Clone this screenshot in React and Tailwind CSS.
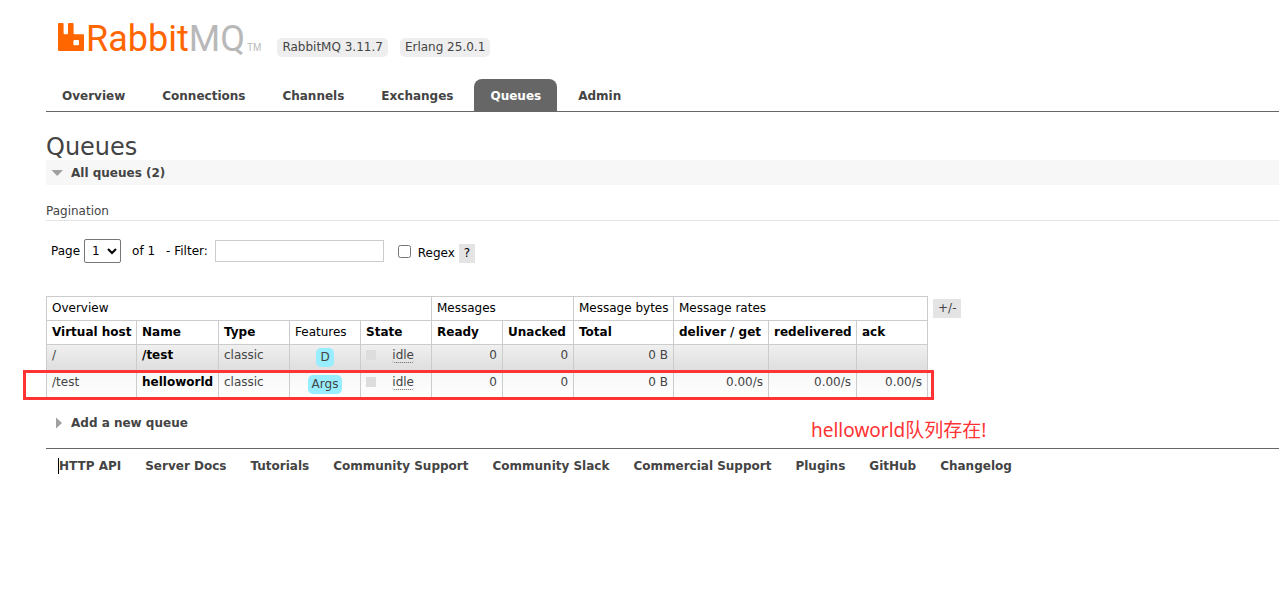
import { useState } from "react";

const tabs = ["Overview", "Connections", "Channels", "Exchanges", "Queues", "Admin"];

const footerLinks = [
  "HTTP API",
  "Server Docs",
  "Tutorials",
  "Community Support",
  "Community Slack",
  "Commercial Support",
  "Plugins",
  "GitHub",
  "Changelog",
];

const groups = [
  { label: "Overview", span: 5 },
  { label: "Messages", span: 2 },
  { label: "Message bytes", span: 1 },
  { label: "Message rates", span: 3 },
];

const columns = [
  { label: "Virtual host", width: "w-[90px]" },
  { label: "Name", width: "w-[82px]" },
  { label: "Type", width: "w-[71px]" },
  { label: "Features", width: "w-[71px]", plain: true },
  { label: "State", width: "w-[71px]" },
  { label: "Ready", width: "w-[71px]" },
  { label: "Unacked", width: "w-[71px]" },
  { label: "Total", width: "w-[100px]" },
  { label: "deliver / get", width: "w-[95px]" },
  { label: "redelivered", width: "w-[88px]" },
  { label: "ack", width: "w-[71px]" },
];

const queues = [
  {
    vhost: "/",
    name: "/test",
    type: "classic",
    feature: "D",
    state: "idle",
    numbers: ["0", "0", "0 B", "", "", ""],
  },
  {
    vhost: "/test",
    name: "helloworld",
    type: "classic",
    feature: "Args",
    state: "idle",
    numbers: ["0", "0", "0 B", "0.00/s", "0.00/s", "0.00/s"],
  },
];

const Logo = () => (
  <a href="#overview" className="flex items-start pl-3">
    <svg viewBox="0 0 26 28" className="mt-[5px] h-7 w-[26px]" aria-hidden="true">
      <path
        fill="#ff6600"
        fillRule="evenodd"
        d="M1 0H4.6Q5.6 0 5.6 1V10.2Q5.6 11.2 6.6 11.2H9Q10 11.2 10 10.2V1Q10 0 11 0H14.6Q15.6 0 15.6 1V10.2Q15.6 11.2 16.6 11.2H25Q26 11.2 26 12.2V27Q26 28 25 28H1Q0 28 0 27V1Q0 0 1 0ZM16.4 17Q15.4 17 15.4 18V21.2Q15.4 22.2 16.4 22.2H20Q21 22.2 21 21.2V18Q21 17 20 17Z"
      />
    </svg>
    <span className="ml-[2px] font-[Roboto,sans-serif] text-[36px] leading-[42px] font-normal text-[#ff6600]">
      Rabbit<span className="text-[#b8b8b8]">MQ</span>
    </span>
    <span className="ml-[2px] pt-6 font-['Liberation_Sans',sans-serif] text-[10px] leading-3 text-[#b8b8b8]">
      TM
    </span>
  </a>
);

const Tag = ({ children }) => (
  <span className="rounded-[5px] bg-[#eeeeee] px-[5px] leading-[19px]">{children}</span>
);

const SectionTitle = ({ open, onClick, children }) => (
  <h2 className={open ? "bg-[#f7f7f7]" : ""}>
    <button
      type="button"
      aria-expanded={open}
      onClick={onClick}
      className="flex h-[25px] w-full items-center pl-[5px] text-left font-bold"
    >
      <svg viewBox="0 0 12 12" className="mr-2 h-3 w-3 shrink-0" aria-hidden="true">
        {open ? (
          <path fill="#a0a0a0" d="M0.5 3H12L6.2 9Z" />
        ) : (
          <path fill="#a0a0a0" d="M5 0.5V11.5L11 6Z" />
        )}
      </svg>
      {children}
    </button>
  </h2>
);

const QueueTable = () => (
  <table className="w-[882px] table-fixed border-collapse leading-[23px]">
    <colgroup>
      {columns.map((column) => (
        <col key={column.label} className={column.width} />
      ))}
    </colgroup>
    <thead className="text-left text-black">
      <tr>
        {groups.map((group) => (
          <th
            key={group.label}
            colSpan={group.span}
            scope="colgroup"
            className="border border-[#cccccc] px-[5px] font-normal whitespace-nowrap"
          >
            {group.label}
          </th>
        ))}
      </tr>
      <tr>
        {columns.map((column) => (
          <th
            key={column.label}
            scope="col"
            className={`border border-[#cccccc] px-[5px] whitespace-nowrap ${
              column.plain ? "font-normal" : "font-bold"
            }`}
          >
            {column.plain ? column.label : <button type="button">{column.label}</button>}
          </th>
        ))}
      </tr>
    </thead>
    <tbody>
      {queues.map((queue, index) => (
        <tr
          key={queue.name}
          className={`h-[27px] align-top leading-5 ${
            index % 2 === 0
              ? "bg-linear-to-b from-[#f0f0f0] to-[#dddddd]"
              : "bg-linear-to-b from-[#f7f7f7] to-white"
          }`}
        >
          <td className="border-x border-[#cccccc] px-[5px]">{queue.vhost}</td>
          <td className="border-x border-[#cccccc] px-[5px]">
            <a href="#queue" className="font-bold text-black">
              {queue.name}
            </a>
          </td>
          <td className="border-x border-[#cccccc] px-[5px]">{queue.type}</td>
          <td className="border-x border-[#cccccc] px-[5px] pt-[2px] text-center">
            <span className="inline-block rounded-[5px] bg-[#98eeff] px-1 leading-[19px]">
              {queue.feature}
            </span>
          </td>
          <td className="border-x border-[#cccccc] px-[5px]">
            <div className="flex items-start justify-between pr-3">
              <span className="mt-[5px] h-[10px] w-[10px] bg-[#dddddd]" />
              <span className="mt-[3px] rounded-[3px] border-b border-dotted border-[#666666] leading-[14px]">
                {queue.state}
              </span>
            </div>
          </td>
          {queue.numbers.map((value, i) => (
            <td key={i} className="border-x border-[#cccccc] px-[5px] text-right">
              {value}
            </td>
          ))}
        </tr>
      ))}
    </tbody>
  </table>
);

const App = () => {
  const [filter, setFilter] = useState("");
  const [regex, setRegex] = useState(false);
  const [showAll, setShowAll] = useState(true);
  const [showAdd, setShowAdd] = useState(false);

  return (
    <div className="min-h-screen overflow-x-hidden bg-white pt-[18px] pl-[46px] font-['DejaVu_Sans',Verdana,sans-serif] text-xs text-[#444444]">
      <header>
        <div className="flex h-[61px] items-start">
          <Logo />
          <div className="mt-5 ml-4 flex gap-3">
            <Tag>RabbitMQ 3.11.7</Tag>
            <Tag>Erlang 25.0.1</Tag>
          </div>
        </div>
        <nav className="flex gap-[5px] border-b border-[#666666]">
          {tabs.map((tab) => (
            <a
              key={tab}
              href={`#${tab.toLowerCase()}`}
              className={`rounded-t-lg px-4 pt-[9px] pb-[7px] leading-4 font-bold ${
                tab === "Queues" ? "bg-[#666666] text-white" : ""
              }`}
            >
              {tab}
            </a>
          ))}
        </nav>
      </header>

      <main>
        <h1 className="pt-[22px] text-2xl leading-[26px]">Queues</h1>
        <SectionTitle open={showAll} onClick={() => setShowAll(!showAll)}>
          All queues (2)
        </SectionTitle>

        {showAll && (
          <div>
            <h3 className="mt-[17px] border-b border-[#e4e4e4] leading-[18px]">Pagination</h3>
            <form className="mt-[18px] flex h-6 items-center pl-[5px] text-black">
              <label htmlFor="page">Page</label>
              <select
                id="page"
                className="ml-1 h-6 w-[37px] rounded-[2px] border border-[#767676] bg-white pl-[3px]"
              >
                <option>1</option>
              </select>
              <span className="ml-[11px]">of 1</span>
              <label htmlFor="filter" className="ml-[11px]">
                - Filter:
              </label>
              <input
                id="filter"
                type="text"
                value={filter}
                onChange={(e) => setFilter(e.target.value)}
                className="ml-[7px] h-[22px] w-[169px] border border-[#cccccc] px-1"
              />
              <input
                id="regex"
                type="checkbox"
                checked={regex}
                onChange={(e) => setRegex(e.target.checked)}
                className="ml-[14px] h-[13px] w-[13px]"
              />
              <label htmlFor="regex" className="ml-[7px] pt-1">
                Regex
              </label>
              <button type="button" className="mt-1 ml-1 bg-[#e4e4e4] px-[5px] leading-[19px]">
                ?
              </button>
            </form>

            <div className="relative mt-[33px] flex w-fit items-start">
              <QueueTable />
              <button
                type="button"
                className="mt-[3px] ml-[5px] bg-[#e4e4e4] px-[5px] leading-[19px]"
              >
                +/-
              </button>
              {/* marks the helloworld row */}
              <div className="pointer-events-none absolute -bottom-px -left-[23px] h-[30px] w-[911px] border-3 border-[#ff3333]" />
              <p className="absolute top-full left-[765px] mt-[19px] font-['Noto_Sans','Noto_Sans_CJK_SC',sans-serif] text-[19px] leading-6 whitespace-nowrap text-[#ff3333]">
                helloworld队列存在!
              </p>
            </div>
          </div>
        )}

        <div className="mt-3">
          <SectionTitle open={showAdd} onClick={() => setShowAdd(!showAdd)}>
            Add a new queue
          </SectionTitle>
        </div>
      </main>

      <footer className="mt-3 flex gap-6 border-t border-[#666666] pt-[9px] pl-3 leading-4 font-bold">
        {footerLinks.map((link, i) => (
          <a
            key={link}
            href="#docs"
            className={`whitespace-nowrap ${i === 0 ? "border-l border-black" : ""}`}
          >
            {link}
          </a>
        ))}
      </footer>
    </div>
  );
};

export default App;
